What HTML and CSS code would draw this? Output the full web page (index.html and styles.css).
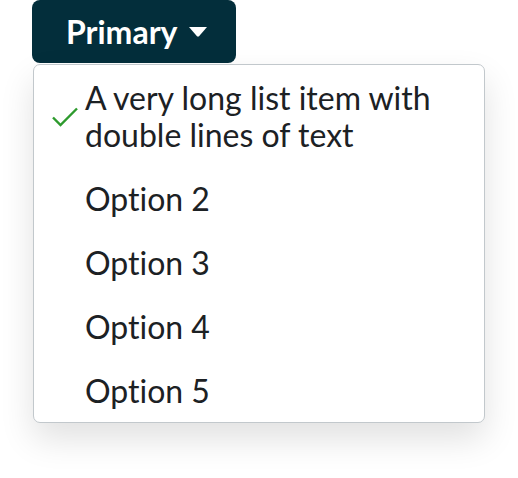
FILE: index.html
```html
<!DOCTYPE html>
<html>
<head>
<meta charset="utf-8">
<link rel="stylesheet" href="styles.css">
</head>
<body>
<div class="dropdown">
  <button class="trigger">
    <span class="trigger-label">Primary</span>
    <svg class="caret" width="18" height="10" viewBox="0 0 18 10"><path d="M0 0 H18 L9.8 9.5 H8.2 Z" fill="#fff"/></svg>
  </button>
  <ul class="menu">
    <li class="item selected">
      <svg class="check" width="26" height="20" viewBox="0 0 26 20"><path d="M1 10.5 L8.5 18 L25 1.5" fill="none" stroke="#2d9a2d" stroke-width="2.4"/></svg>
      <span class="label">A very long list item with double lines of text</span>
    </li>
    <li class="item"><span class="label">Option 2</span></li>
    <li class="item"><span class="label">Option 3</span></li>
    <li class="item"><span class="label">Option 4</span></li>
    <li class="item"><span class="label">Option 5</span></li>
  </ul>
</div>
</body>
</html>
```

FILE: styles.css
```css
html, body {
  margin: 0;
  padding: 0;
  background: #ffffff;
}
body {
  min-height: 478px;
  font-family: Lato, "Liberation Sans", sans-serif;
  font-variant-ligatures: none;
}
.dropdown {
  display: flex;
  flex-direction: column;
  align-items: flex-start;
  padding-left: 32px;
  width: 453px;
}
.trigger {
  display: flex;
  align-items: center;
  gap: 12px;
  height: 63px;
  width: 204px;
  padding: 0 0 0 34px;
  margin: 0;
  border: none;
  border-radius: 8px;
  background: #032e3b;
  color: #ffffff;
  font-family: inherit;
  font-variant-ligatures: none;
  font-size: 32px;
  font-weight: 700;
}
.caret {
  display: block;
  flex: none;
  margin-top: 1px;
}
.menu {
  list-style: none;
  margin: 1px 0 0 1px;
  padding: 0;
  width: 450px;
  border: 1px solid #c2c8cc;
  border-radius: 7px;
  background: #ffffff;
  box-shadow: 0 16px 34px rgba(0, 0, 0, 0.12);
}
.item {
  display: flex;
  align-items: center;
  padding: 13.5px 40px 13.5px 51px;
  font-size: 32px;
  line-height: 37px;
  color: #1c2124;
}
.check {
  display: block;
  flex: none;
  width: 26px;
  margin-left: -33px;
  margin-right: 7px;
  margin-top: 2px;
}
```
